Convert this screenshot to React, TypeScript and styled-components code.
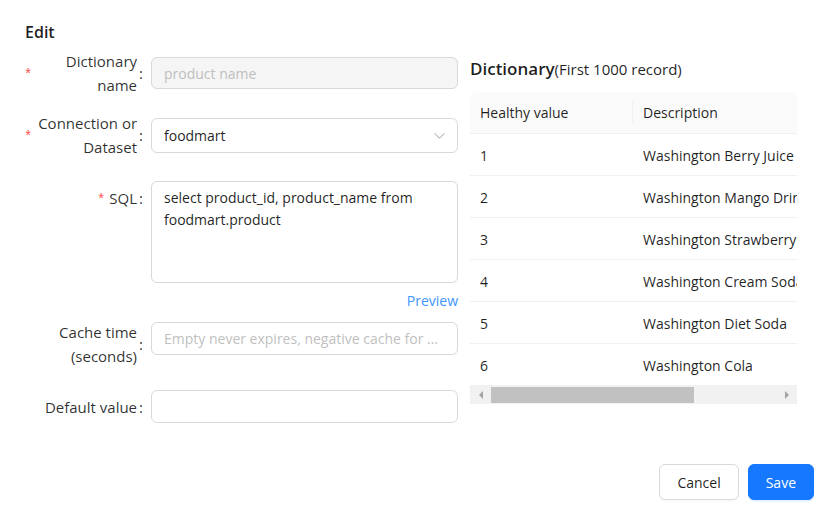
import styled, { createGlobalStyle } from "styled-components";

const GlobalStyle = createGlobalStyle`
    body {
        margin: 0;
        background: #fff;
        font-family: "Segoe UI", "Open Sans", "Noto Sans", sans-serif;
        font-size: 14px;
        color: rgba(0, 0, 0, 0.88);
    }
`;

const Page = styled.div`
    width: 840px;
    height: 522px;
    box-sizing: border-box;
    padding: 20px 26px 0 24px;
`;

const Title = styled.div`
    font-size: 16px;
    font-weight: 600;
    line-height: 24px;
    padding-left: 1px;
    margin-bottom: 5px;
`;

const Body = styled.div`
    display: flex;
    gap: 12px;
`;

const FormCol = styled.div`
    width: 434px;
    display: flex;
    flex-direction: column;
`;

const FormItem = styled.div<{ $align?: string; $top?: number }>`
    display: flex;
    align-items: ${(p) => p.$align || "center"};
    margin-top: ${(p) => p.$top || 0}px;
`;

const Label = styled.label<{ $pad?: number }>`
    width: 127px;
    flex-shrink: 0;
    display: flex;
    align-items: center;
    justify-content: flex-end;
    padding-top: ${(p) => p.$pad || 0}px;
    font-size: 15px;
    line-height: 24px;
    color: rgba(0, 0, 0, 0.82);
    box-sizing: border-box;
`;

const Required = styled.span`
    color: #ff4d4f;
    font-family: SimSun, "Liberation Mono", monospace;
    font-size: 14px;
    line-height: 1;
    margin: 3px 4px 0 0;
    flex-shrink: 0;
`;

const LabelText = styled.span`
    text-align: right;
`;

const Colon = styled.span`
    margin: 0 8px 0 2px;
    flex-shrink: 0;
`;

const Control = styled.div<{ $top?: number }>`
    flex: 1;
    min-width: 0;
    margin-top: ${(p) => p.$top || 0}px;
`;

const Input = styled.input<{ $h?: number }>`
    box-sizing: border-box;
    width: 100%;
    height: ${(p) => p.$h || 33}px;
    padding: 0 12px;
    border: 1px solid #d9d9d9;
    border-radius: 6px;
    font: inherit;
    color: rgba(0, 0, 0, 0.88);
    background: #fff;
    outline: none;
    text-overflow: ellipsis;
    &::placeholder {
        color: #bfbfbf;
    }
    &:disabled {
        background: #f5f5f5;
    }
`;

const Select = styled.div`
    box-sizing: border-box;
    height: 35px;
    padding: 0 11px 0 12px;
    border: 1px solid #d9d9d9;
    border-radius: 6px;
    display: flex;
    align-items: center;
    justify-content: space-between;
`;

const TextArea = styled.textarea`
    box-sizing: border-box;
    width: 100%;
    height: 102px;
    padding: 5px 12px;
    border: 1px solid #d9d9d9;
    border-radius: 6px;
    font: inherit;
    line-height: 22px;
    color: rgba(0, 0, 0, 0.88);
    resize: none;
    outline: none;
    display: block;
`;

const PreviewRow = styled.div`
    display: flex;
    justify-content: flex-end;
    margin-top: 8px;
    line-height: 20px;
`;

const Link = styled.a`
    color: #4096ff;
    cursor: pointer;
`;

const Panel = styled.div`
    width: 327px;
    padding-top: 8px;
    overflow: hidden;
`;

const PanelTitle = styled.div`
    font-size: 17px;
    font-weight: 600;
    line-height: 24px;
    margin-bottom: 11px;
    white-space: nowrap;
    span {
        font-size: 15px;
        font-weight: 400;
    }
`;

const TableWrap = styled.div`
    overflow: hidden;
    border-radius: 8px 8px 0 0;
`;

const Table = styled.table`
    width: 460px;
    border-collapse: collapse;
    table-layout: fixed;
`;

const Th = styled.th<{ $w?: number }>`
    box-sizing: border-box;
    width: ${(p) => (p.$w ? `${p.$w}px` : "auto")};
    position: relative;
    height: 41px;
    padding: 0 10px;
    background: #fafafa;
    border-bottom: 1px solid #f0f0f0;
    text-align: left;
    font-weight: 500;
    white-space: nowrap;
    &:not(:last-child)::before {
        content: "";
        position: absolute;
        right: 0;
        top: 50%;
        width: 1px;
        height: 22px;
        transform: translateY(-50%);
        background: #f0f0f0;
    }
`;

const Td = styled.td`
    height: 42px;
    box-sizing: border-box;
    padding: 2px 10px 0;
    border-bottom: 1px solid #f0f0f0;
    white-space: nowrap;
    overflow: hidden;
`;

const ScrollBar = styled.div`
    height: 18px;
    background: #f1f1f1;
    display: flex;
    align-items: center;
`;

const Arrow = styled.div<{ $dir: "left" | "right" }>`
    width: 21px;
    height: 100%;
    display: flex;
    align-items: center;
    justify-content: center;
    &::after {
        content: "";
        border-top: 4px solid transparent;
        border-bottom: 4px solid transparent;
        ${(p) => (p.$dir === "left" ? "border-right: 4px solid #a3a3a3;" : "border-left: 4px solid #a3a3a3;")}
    }
`;

const Track = styled.div`
    flex: 1;
    height: 100%;
    padding: 1px 0;
    box-sizing: border-box;
`;

const Thumb = styled.div`
    height: 100%;
    background: #c1c1c1;
`;

const Footer = styled.div`
    display: flex;
    justify-content: flex-end;
    gap: 9px;
    margin-top: 41px;
`;

const Button = styled.button<{ $primary?: boolean }>`
    height: 36px;
    padding: 0 17px;
    border-radius: 6px;
    font: inherit;
    font-size: 14px;
    cursor: pointer;
    border: 1px solid ${(p) => (p.$primary ? "#1677ff" : "#d9d9d9")};
    background: ${(p) => (p.$primary ? "#1677ff" : "#fff")};
    color: ${(p) => (p.$primary ? "#fff" : "rgba(0, 0, 0, 0.88)")};
    box-shadow: ${(p) => (p.$primary ? "0 2px 0 rgba(5, 145, 255, 0.1)" : "0 2px 0 rgba(0, 0, 0, 0.02)")};
`;

const rows = [
    { id: 1, desc: "Washington Berry Juice" },
    { id: 2, desc: "Washington Mango Drink" },
    { id: 3, desc: "Washington Strawberry Drink" },
    { id: 4, desc: "Washington Cream Soda" },
    { id: 5, desc: "Washington Diet Soda" },
    { id: 6, desc: "Washington Cola" },
];

const ChevronDown = () => (
    <svg width="13" height="13" viewBox="0 0 12 12" fill="none">
        <path d="M1.5 4 L6 8.5 L10.5 4" stroke="#bfbfbf" strokeWidth="1" />
    </svg>
);

const App = () => {
    const visible = 327 - 42;
    const thumbWidth = Math.round(visible * (327 / 460));

    return (
        <>
            <GlobalStyle />
            <Page>
                <Title>Edit</Title>
                <Body>
                    <FormCol>
                        <FormItem>
                            <Label>
                                <Required>*</Required>
                                <LabelText>Dictionary name</LabelText>
                                <Colon>:</Colon>
                            </Label>
                            <Control>
                                <Input disabled placeholder="product name" $h={32} />
                            </Control>
                        </FormItem>
                        <FormItem $top={14}>
                            <Label>
                                <Required>*</Required>
                                <LabelText>Connection or Dataset</LabelText>
                                <Colon>:</Colon>
                            </Label>
                            <Control>
                                <Select>
                                    <span>foodmart</span>
                                    <ChevronDown />
                                </Select>
                            </Control>
                        </FormItem>
                        <FormItem $top={22} $align="flex-start">
                            <Label $pad={5}>
                                <Required>*</Required>
                                <LabelText>SQL</LabelText>
                                <Colon>:</Colon>
                            </Label>
                            <Control>
                                <TextArea defaultValue="select product_id, product_name from foodmart.product" />
                                <PreviewRow>
                                    <Link>Preview</Link>
                                </PreviewRow>
                            </Control>
                        </FormItem>
                        <FormItem $top={9} $align="flex-start">
                            <Label>
                                <LabelText>Cache time (seconds)</LabelText>
                                <Colon>:</Colon>
                            </Label>
                            <Control $top={2}>
                                <Input placeholder="Empty never expires, negative cache for 1 day" />
                            </Control>
                        </FormItem>
                        <FormItem $top={22}>
                            <Label>
                                <LabelText>Default value</LabelText>
                                <Colon>:</Colon>
                            </Label>
                            <Control>
                                <Input />
                            </Control>
                        </FormItem>
                    </FormCol>
                    <Panel>
                        <PanelTitle>
                            Dictionary<span>(First 1000 record)</span>
                        </PanelTitle>
                        <TableWrap>
                            <Table>
                                <thead>
                                    <tr>
                                        <Th $w={163}>Healthy value</Th>
                                        <Th>Description</Th>
                                    </tr>
                                </thead>
                                <tbody>
                                    {rows.map((row) => (
                                        <tr key={row.id}>
                                            <Td>{row.id}</Td>
                                            <Td>{row.desc}</Td>
                                        </tr>
                                    ))}
                                </tbody>
                            </Table>
                        </TableWrap>
                        <ScrollBar>
                            <Arrow $dir="left" />
                            <Track>
                                <Thumb style={{ width: thumbWidth }} />
                            </Track>
                            <Arrow $dir="right" />
                        </ScrollBar>
                    </Panel>
                </Body>
                <Footer>
                    <Button>Cancel</Button>
                    <Button $primary>Save</Button>
                </Footer>
            </Page>
        </>
    );
};

export default App;
